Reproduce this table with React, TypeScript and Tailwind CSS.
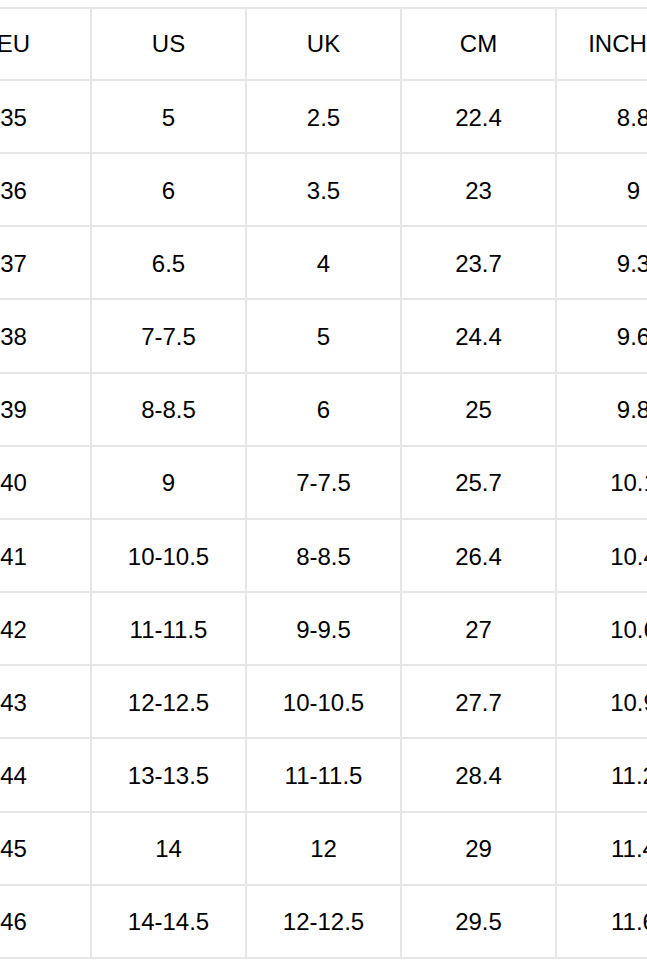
const headers = ["EU", "US", "UK", "CM", "INCHES"]

const rows: string[][] = [
  ["35", "5", "2.5", "22.4", "8.8"],
  ["36", "6", "3.5", "23", "9"],
  ["37", "6.5", "4", "23.7", "9.3"],
  ["38", "7-7.5", "5", "24.4", "9.6"],
  ["39", "8-8.5", "6", "25", "9.8"],
  ["40", "9", "7-7.5", "25.7", "10.1"],
  ["41", "10-10.5", "8-8.5", "26.4", "10.4"],
  ["42", "11-11.5", "9-9.5", "27", "10.6"],
  ["43", "12-12.5", "10-10.5", "27.7", "10.9"],
  ["44", "13-13.5", "11-11.5", "28.4", "11.2"],
  ["45", "14", "12", "29", "11.4"],
  ["46", "14-14.5", "12-12.5", "29.5", "11.6"],
]

export default function App() {
  return (
    <div className="w-[647px] h-[966px] overflow-hidden bg-white text-black font-['Liberation_Sans',Arial,sans-serif]">
      <div className="pt-[7px] ml-[-65px]">
        <div className="grid grid-cols-[repeat(5,155px)] w-max border-t-2 border-l-2 border-[#e6e6e6] text-[24px] leading-none">
          {headers.map((h) => (
            <div key={h} className="h-[72px] flex items-center justify-center border-r-2 border-b-2 border-[#e6e6e6]">
              {h}
            </div>
          ))}
          {rows.map((row) =>
            row.map((cell, i) => (
              <div
                key={row[0] + "-" + i}
                className="h-[73.17px] pt-[2px] flex items-center justify-center border-r-2 border-b-2 border-[#e6e6e6]"
              >
                {cell}
              </div>
            ))
          )}
        </div>
      </div>
    </div>
  )
}
